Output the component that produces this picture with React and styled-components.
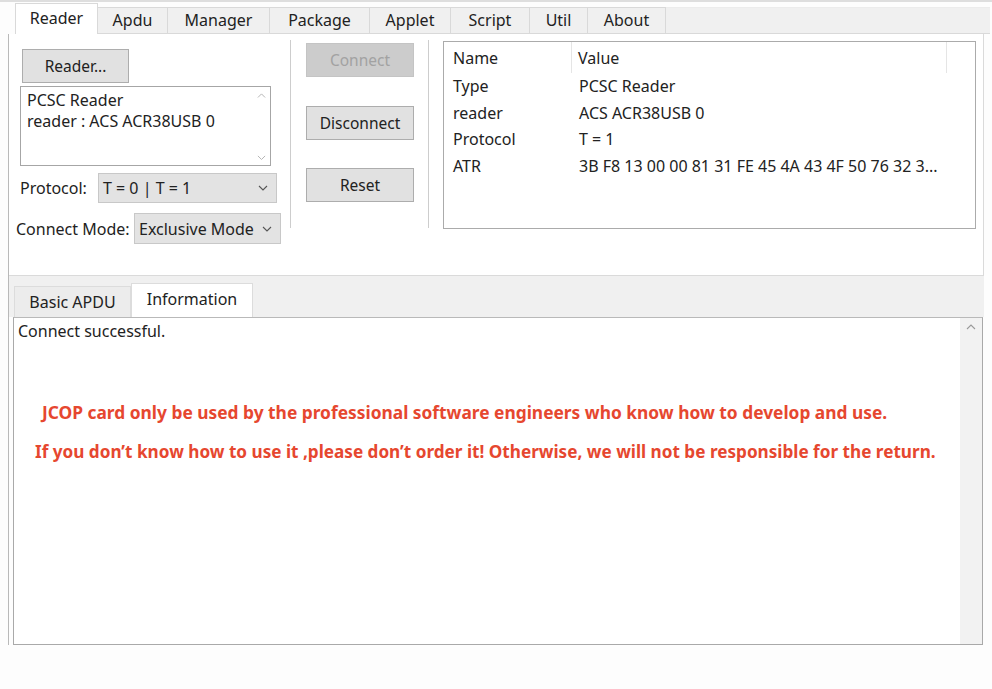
import React from 'react';
import styled, { createGlobalStyle } from 'styled-components';

const Global = createGlobalStyle`
  html, body { margin: 0; padding: 0; background: #fdfdfd; }
  body { font-family: "Noto Sans", "Open Sans", sans-serif; color: #222; }
  * { box-sizing: border-box; }
`;

const Page = styled.div`
  width: 992px;
  height: 689px;
  overflow: hidden;
  background: #fdfdfd;
  display: flex;
  flex-direction: column;
`;

const TopLine = styled.div`
  height: 2px;
  background: #dedede;
`;

const TabStrip = styled.div`
  display: flex;
  align-items: flex-end;
  height: 32px;
  padding-left: 16px;
  padding-right: 2px;
`;

const Tab = styled.div`
  width: ${p => p.$w}px;
  height: ${p => (p.$active ? 31 : 27)}px;
  margin-left: -1px;
  background: ${p => (p.$active ? '#ffffff' : '#f0f0f0')};
  border: 1px solid #d9d9d9;
  border-bottom: ${p => (p.$active ? 'none' : '1px solid #d9d9d9')};
  display: flex;
  align-items: center;
  justify-content: center;
  padding-bottom: ${p => (p.$active ? 3 : 1)}px;
  font-size: 16px;
  color: #222;
`;

const TabFiller = styled.div`
  flex: 1;
  height: 27px;
  background: #f0f0f0;
  border-bottom: 1px solid #d9d9d9;
  border-top: 1px solid #ececec;
`;

const Frame = styled.div`
  margin-left: 8px;
  width: 976px;
  height: 611px;
  border-left: 1px solid #b9b9b9;
  display: flex;
  flex-direction: column;
`;

const TopPanel = styled.div`
  height: 242px;
  background: #ffffff;
  border-right: 1px solid #dadada;
  border-bottom: 1px solid #dadada;
  display: flex;
  align-items: flex-start;
`;

const LeftCol = styled.div`
  width: 272px;
  display: flex;
  flex-direction: column;
  align-items: flex-start;
`;

const Button = styled.div`
  width: ${p => p.$w || 108}px;
  height: 34px;
  background: ${p => (p.$disabled ? '#cccccc' : '#e1e1e1')};
  border: 1px solid ${p => (p.$disabled ? '#c4c4c4' : '#adadad')};
  color: ${p => (p.$disabled ? '#a2a2a2' : '#222')};
  display: flex;
  align-items: center;
  justify-content: center;
  font-size: 15.5px;
  flex: none;
`;

const ReaderButton = styled(Button)`
  margin: 15px 0 0 13px;
`;

const ListBox = styled.div`
  margin: 3px 0 0 11px;
  width: 251px;
  height: 80px;
  border: 1px solid #a6a6a6;
  background: #fff;
  display: flex;
`;

const ListText = styled.div`
  flex: 1;
  padding: 3px 0 0 6px;
  font-size: 16px;
  line-height: 21px;
`;

const MiniScroll = styled.div`
  width: 18px;
  display: flex;
  flex-direction: column;
  justify-content: space-between;
  align-items: center;
  padding: 6px 0 5px;
`;

const FieldRow = styled.div`
  margin-top: ${p => p.$mt}px;
  padding-left: ${p => p.$pl}px;
  height: ${p => p.$h}px;
  display: flex;
  align-items: center;
`;

const FieldLabel = styled.div`
  width: ${p => p.$w}px;
  font-size: 16px;
  color: #222;
`;

const Select = styled.div`
  width: ${p => p.$w}px;
  height: 100%;
  background: #e3e3e3;
  border: 1px solid #c8c8c8;
  display: flex;
  align-items: center;
  justify-content: space-between;
  padding: 0 8px 0 4px;
  font-size: 16px;
`;

const Separator = styled.div`
  margin: 6px 0 0 ${p => p.$ml}px;
  width: 2px;
  height: 188px;
  border-left: 1px solid #cdcdcd;
  border-right: 1px solid #ffffff;
  flex: none;
`;

const MidCol = styled.div`
  margin-left: 14px;
  padding-top: 9px;
  display: flex;
  flex-direction: column;
  gap: 28.5px;
`;

const ListView = styled.div`
  margin: 7px 0 0 13px;
  width: 533px;
  height: 188px;
  border: 1px solid #ababab;
  background: #fff;
  display: flex;
  flex-direction: column;
`;

const HeaderRow = styled.div`
  display: flex;
  height: 31px;
  align-items: stretch;
`;

const HeaderCell = styled.div`
  width: ${p => p.$w}px;
  border-right: 1px solid #e5e5e5;
  padding-left: ${p => p.$pl}px;
  display: flex;
  align-items: center;
  font-size: 16px;
`;

const DataRow = styled.div`
  display: flex;
  height: 26.5px;
  align-items: center;
  font-size: 16px;
`;

const DataCell = styled.div`
  width: ${p => p.$w}px;
  padding-left: ${p => p.$pl}px;
  white-space: nowrap;
  overflow: hidden;
`;

const BottomBar = styled.div`
  height: 41px;
  background: #f0f0f0;
  display: flex;
  align-items: flex-end;
  padding-left: 5px;
`;

const BTab = styled.div`
  width: ${p => p.$w}px;
  height: ${p => (p.$active ? 34 : 31)}px;
  background: ${p => (p.$active ? '#ffffff' : '#ececec')};
  border: 1px solid #dcdcdc;
  border-bottom: none;
  display: flex;
  align-items: center;
  justify-content: center;
  padding-bottom: ${p => (p.$active ? 3 : 0)}px;
  font-size: 16px;
  color: #222;
`;

const TextArea = styled.div`
  margin-left: 4px;
  width: 970px;
  height: 328px;
  border: 1px solid #a9a9a9;
  border-top-color: #b9b9b9;
  background: #fff;
  display: flex;
`;

const TextContent = styled.div`
  flex: 1;
  padding: 2px 0 0 4px;
`;

const LogLine = styled.div`
  font-size: 16px;
  line-height: 22px;
  color: #222;
`;

const Warnings = styled.div`
  margin-top: 51px;
`;

const Warning = styled.div`
  padding-left: ${p => p.$indent}px;
  font-size: ${p => p.$size}px;
  font-weight: 700;
  line-height: 39px;
  color: #e6472f;
  white-space: nowrap;
`;

const ScrollBar = styled.div`
  width: 22px;
  background: #f2f2f2;
  display: flex;
  justify-content: center;
  padding-top: 6px;
`;

const Chevron = ({ up, color = '#555', size = 10 }) => (
  <svg width={size} height={size * 0.6} viewBox="0 0 10 6">
    <polyline
      points={up ? '1,5 5,1 9,5' : '1,1 5,5 9,1'}
      fill="none"
      stroke={color}
      strokeWidth="1.1"
    />
  </svg>
);

const tabs = [
  ['Reader', 83, true],
  ['Apdu', 71],
  ['Manager', 103],
  ['Package', 101],
  ['Applet', 82],
  ['Script', 80],
  ['Util', 59],
  ['About', 79],
];

const rows = [
  ['Type', 'PCSC Reader'],
  ['reader', 'ACS ACR38USB 0'],
  ['Protocol', 'T = 1'],
  ['ATR', '3B F8 13 00 00 81 31 FE 45 4A 43 4F 50 76 32 3...'],
];

export default function App() {
  return (
    <Page>
      <Global />
      <TopLine />
      <TabStrip>
        {tabs.map(([t, w, a]) => (
          <Tab key={t} $w={w} $active={a}>{t}</Tab>
        ))}
        <TabFiller />
      </TabStrip>
      <Frame>
        <TopPanel>
          <LeftCol>
            <ReaderButton $w={107}>Reader...</ReaderButton>
            <ListBox>
              <ListText>
                <div>PCSC Reader</div>
                <div>reader : ACS ACR38USB 0</div>
              </ListText>
              <MiniScroll>
                <Chevron up color="#b5b5b5" size={9} />
                <Chevron color="#b5b5b5" size={9} />
              </MiniScroll>
            </ListBox>
            <FieldRow $mt={7} $pl={11} $h={30}>
              <FieldLabel $w={78}>Protocol:</FieldLabel>
              <Select $w={179}>
                <span>T = 0 | T = 1</span>
                <Chevron />
              </Select>
            </FieldRow>
            <FieldRow $mt={10} $pl={7} $h={31}>
              <FieldLabel $w={118}>Connect Mode:</FieldLabel>
              <Select $w={147}>
                <span>Exclusive Mode</span>
                <Chevron />
              </Select>
            </FieldRow>
          </LeftCol>
          <Separator $ml={9} />
          <MidCol>
            <Button $disabled>Connect</Button>
            <Button>Disconnect</Button>
            <Button>Reset</Button>
          </MidCol>
          <Separator $ml={14} />
          <ListView>
            <HeaderRow>
              <HeaderCell $w={128} $pl={9}>Name</HeaderCell>
              <HeaderCell $w={375} $pl={6}>Value</HeaderCell>
            </HeaderRow>
            {rows.map(([n, v]) => (
              <DataRow key={n}>
                <DataCell $w={128} $pl={9}>{n}</DataCell>
                <DataCell $w={400} $pl={7}>{v}</DataCell>
              </DataRow>
            ))}
          </ListView>
        </TopPanel>
        <BottomBar>
          <BTab $w={117}>Basic APDU</BTab>
          <BTab $w={122} $active>Information</BTab>
        </BottomBar>
        <TextArea>
          <TextContent>
            <LogLine>Connect successful.</LogLine>
            <Warnings>
              <Warning $indent={24} $size={17.35}>
                JCOP card only be used by the professional software engineers who know how to develop and use.
              </Warning>
              <Warning $indent={17} $size={17.15}>
                If you don’t know how to use it ,please don’t order it! Otherwise, we will not be responsible for the return.
              </Warning>
            </Warnings>
          </TextContent>
          <ScrollBar>
            <Chevron up color="#9a9a9a" size={10} />
          </ScrollBar>
        </TextArea>
      </Frame>
    </Page>
  );
}
